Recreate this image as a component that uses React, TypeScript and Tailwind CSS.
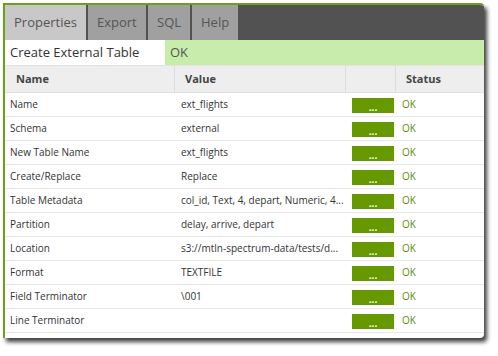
import React from 'react';

const rows: [string, string][] = [
  ['Name', 'ext_flights'],
  ['Schema', 'external'],
  ['New Table Name', 'ext_flights'],
  ['Create/Replace', 'Replace'],
  ['Table Metadata', 'col_id, Text, 4, depart, Numeric, 4...'],
  ['Partition', 'delay, arrive, depart'],
  ['Location', 's3://mtln-spectrum-data/tests/d...'],
  ['Format', 'TEXTFILE'],
  ['Field Terminator', '\\001'],
  ['Line Terminator', ''],
];

const tabs = ['Properties', 'Export', 'SQL', 'Help'];

export default function App() {
  return (
    <div className="w-[498px] h-[356px] bg-white pt-[3px] pl-[3px]" style={{ fontFamily: '"Open Sans", "Liberation Sans", sans-serif' }}>
      <div className="w-[481px] h-[335px] border-t-2 border-l-2 border-[#6f9e1f] rounded-tr-[4px] rounded-br-[4px] shadow-[3px_4px_4px_rgba(0,0,0,0.75)] overflow-hidden flex flex-col bg-white">
        {/* tab bar */}
        <div className="flex h-[35px] bg-[#525252] shrink-0">
          {tabs.map((t, i) => (
            <div
              key={t}
              className={`flex items-center text-[13px] text-[#555] px-[9px] mr-[2px] ${i === 0 ? 'bg-[#c8c8c8] w-[81px]' : 'bg-[#a0a0a0]'} ${i === 1 ? 'w-[58px]' : ''} ${i === 2 ? 'w-[42px]' : ''} ${i === 3 ? 'w-[46px]' : ''}`}
            >
              {t}
            </div>
          ))}
        </div>

        {/* title row */}
        <div className="flex h-[26px] shrink-0 border-b border-[#e2e2e2]">
          <div className="w-[160px] flex items-center pl-[5px] text-[13px] text-[#333]">Create External Table</div>
          <div className="flex-1 bg-[#c8ecaa] flex items-center pl-[5px] text-[13px] text-[#555]">OK</div>
        </div>

        {/* header */}
        <div className="flex h-[27px] shrink-0 bg-[#eeeeee] border-b border-[#e2e2e2] text-[11px] font-bold text-[#444]">
          <div className="w-[170px] flex items-center pl-[11px] border-r border-[#dcdcdc]">Name</div>
          <div className="w-[171px] flex items-center pl-[10px] border-r border-[#dcdcdc]">Value</div>
          <div className="w-[50px] border-r border-[#dcdcdc]"></div>
          <div className="flex-1 flex items-center pl-[10px]">Status</div>
        </div>

        {rows.map(([name, value]) => (
          <div key={name} className="flex h-[24px] shrink-0 border-b border-[#e5e5e5] text-[10px] text-[#333]">
            <div className="w-[170px] flex items-center pl-[5px]">{name}</div>
            <div className="w-[171px] flex items-center pl-[6px] whitespace-nowrap overflow-hidden">{value}</div>
            <div className="w-[50px] pl-[6px] pt-[5px]">
              <div className="w-[42px] h-[15px] bg-[#669900] flex items-end justify-center text-white text-[10px] font-bold leading-[12px]">...</div>
            </div>
            <div className="flex-1 flex items-center pl-[6px] text-[#5e8c0a]">OK</div>
          </div>
        ))}
      </div>
    </div>
  );
}
